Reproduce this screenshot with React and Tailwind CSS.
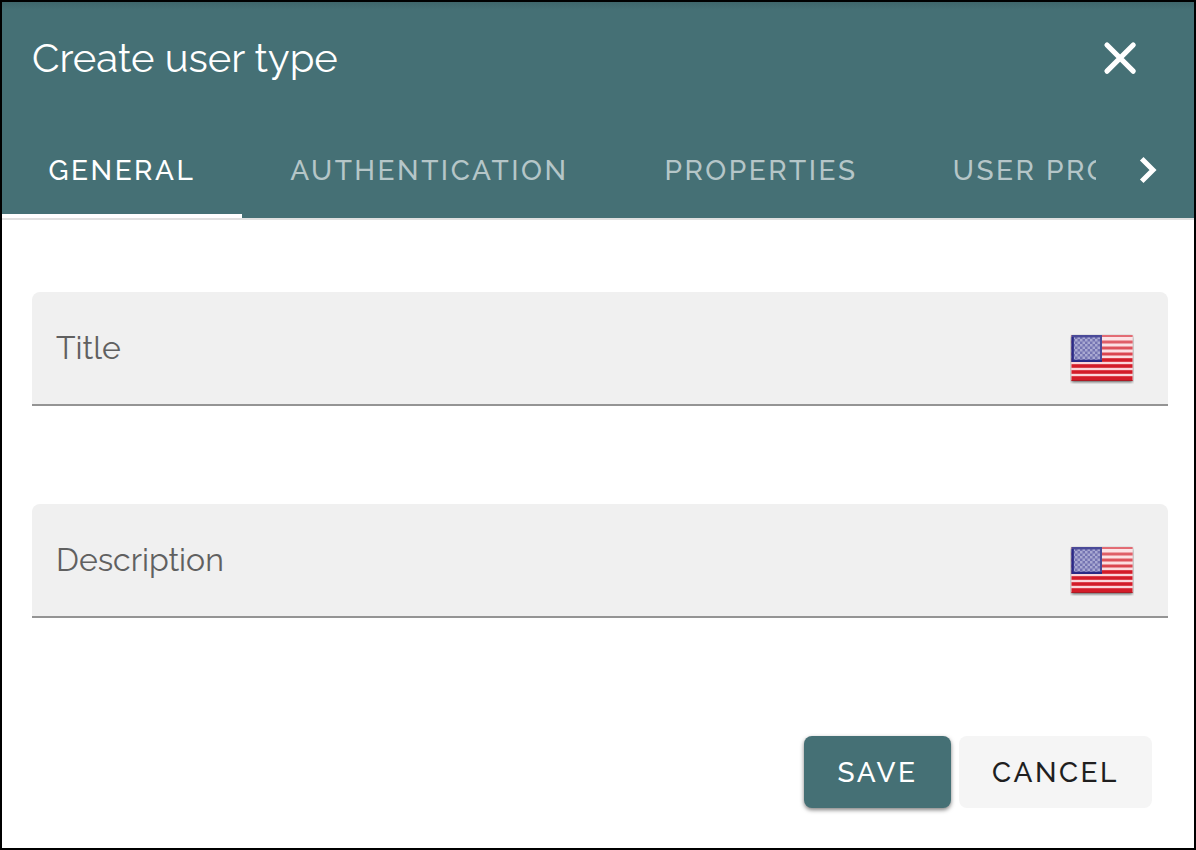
import { useState } from "react";

const TABS = [
  { name: "General", width: "w-[240px]" },
  { name: "Authentication", width: "w-[375px]" },
  { name: "Properties", width: "w-[288px]" },
  { name: "User profile", width: "w-[320px]" },
];

const STRIPES = [
  { y: 1, h: 2 },
  { y: 6.5, h: 3 },
  { y: 12.5, h: 3 },
  { y: 18.5, h: 3 },
  { y: 24.2, h: 3.6 },
  { y: 30.2, h: 3.6 },
  { y: 36.2, h: 3.6 },
  { y: 42.2, h: 4.8 },
];

function Flag() {
  return (
    <svg viewBox="0 0 64 50" className="h-[50px] w-16" aria-hidden="true">
      <defs>
        <linearGradient id="gloss" x1="0" y1="0" x2="0" y2="1">
          <stop offset="0" stopColor="#fff" stopOpacity="0.36" />
          <stop offset="0.5" stopColor="#fff" stopOpacity="0.14" />
          <stop offset="0.51" stopColor="#fff" stopOpacity="0" />
        </linearGradient>
        <pattern id="stars" width="5" height="5" patternUnits="userSpaceOnUse">
          <rect width="2.500" height="2.500" fill="#a9a9d2" />
          <rect x="2.500" y="2.500" width="2.500" height="2.500" fill="#a9a9d2" />
        </pattern>
        <filter id="shade" x="-10%" y="-10%" width="120%" height="125%">
          <feDropShadow dx="0" dy="1" stdDeviation="1.400" floodColor="#000" floodOpacity="0.65" />
        </filter>
      </defs>
      <rect x="1.500" y="1.500" width="61" height="45.500" rx="0.500" fill="#fbd6da" filter="url(#shade)" />
      {STRIPES.map(({ y, h }) => (
        <rect key={y} x="1.500" y={y} width="61" height={h} fill="#d31c29" />
      ))}
      <rect x="1.500" y="1" width="61" height="46" fill="url(#gloss)" />
      <rect x="1.500" y="1" width="30.500" height="27" fill="#4a4a98" />
      <rect x="4" y="3.500" width="26" height="22" fill="#7474b2" />
      <rect x="4" y="3.500" width="26" height="22" fill="url(#stars)" />
      <path d="M2.500 3V27H32" fill="none" stroke="#2a2a85" strokeWidth="2" />
      <path d="M1.500 46.500H62.500" stroke="#ad1b25" strokeWidth="1" />
    </svg>
  );
}

function Field({ id, label }) {
  return (
    <div className="flex h-[114px] items-center rounded-t-lg border-b-2 border-[#949494] bg-[#f0f0f0] pr-[34px] pl-6">
      <label htmlFor={id} className="text-[32px] leading-10 text-[#606060]">
        {label}
      </label>
      <input id={id} type="text" className="h-full min-w-0 flex-1 bg-transparent px-4 text-[32px] outline-none" />
      <div className="pt-[22px]">
        <Flag />
      </div>
    </div>
  );
}

export default function App() {
  const [active, setActive] = useState("General");
  return (
    <div
      role="dialog"
      aria-labelledby="dialog-title"
      className="flex min-h-screen flex-col border-2 border-black bg-white font-['Raleway','Lato',sans-serif]"
    >
      <header className="border-b-2 border-[#e0e0e0] bg-[#457075] bg-linear-to-b from-[#3f666b] to-[#457075] to-[8px] text-white">
        <div className="flex h-28 items-center justify-between pr-[50px] pl-[30px]">
          <h1 id="dialog-title" className="text-[40px] leading-[48px]">
            Create user type
          </h1>
          <button type="button" aria-label="Close" className="flex size-12 items-center justify-center">
            <svg viewBox="0 0 48 48" className="size-12" fill="none" stroke="currentColor" strokeWidth="5.200" strokeLinecap="round">
              <path d="M11 11L37.200 37.200M37.200 11L11 37.200" />
            </svg>
          </button>
        </div>
        <div className="flex h-26 items-end">
          <div role="tablist" className="flex min-w-0 flex-1 overflow-hidden">
            {TABS.map(({ name, width }) => (
              <button
                key={name}
                type="button"
                role="tab"
                aria-selected={active === name}
                onClick={() => setActive(name)}
                className={`${width} h-24 shrink-0 border-b-4 pt-1.5 text-center text-[28px] font-medium tracking-[0.09em] whitespace-nowrap uppercase ${
                  active === name ? "border-white text-white" : "border-transparent text-[#b5c6c8]"
                }`}
              >
                {name}
              </button>
            ))}
          </div>
          <button type="button" aria-label="Next tabs" className="flex h-24 w-[98px] items-center justify-center">
            <svg viewBox="0 0 48 48" className="size-12" fill="none" stroke="currentColor" strokeWidth="5">
              <path d="M22.500 14.500L32 24L22.500 33.500" strokeLinecap="square" />
            </svg>
          </button>
        </div>
      </header>

      <form className="flex flex-1 flex-col" onSubmit={(e) => e.preventDefault()}>
        <div className="flex flex-col gap-[98px] pt-18 pr-[26px] pl-[30px]">
          <Field id="title" label="Title" />
          <Field id="description" label="Description" />
        </div>
        <div className="mt-auto flex justify-end gap-2 pr-[42px] pb-10">
          <button
            type="submit"
            className="h-18 w-[147px] rounded-lg bg-[#457075] pt-0.5 text-[28px] font-medium tracking-[0.09em] text-white uppercase shadow-[0_2px_4px_rgba(0,0,0,0.5)]"
          >
            Save
          </button>
          <button
            type="button"
            className="h-18 w-[193px] rounded-lg bg-[#f5f5f5] pt-0.5 text-[28px] font-medium tracking-[0.09em] text-[#1f1f1f] uppercase"
          >
            Cancel
          </button>
        </div>
      </form>
    </div>
  );
}
